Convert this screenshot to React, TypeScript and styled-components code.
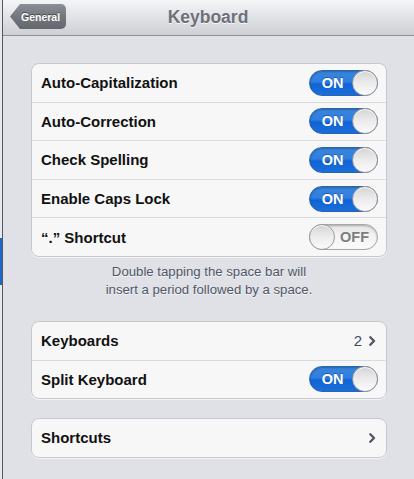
import React from "react";
import styled, { createGlobalStyle } from "styled-components";

const Global = createGlobalStyle`
  html, body { margin: 0; padding: 0; background: #dfe1e6; }
  body { font-family: "Liberation Sans", Arial, sans-serif; -webkit-font-smoothing: antialiased; }
  * { box-sizing: border-box; }
`;

const Frame = styled.div`
  display: flex;
  width: 414px;
  height: 479px;
  overflow: hidden;
  background: #dfe1e6;
`;

const EdgeStrip = styled.div`
  width: 2px;
  display: flex;
  flex-direction: column;
  background: #e8e9ec;
`;

const EdgeSpacer = styled.div<{ $h: number }>`
  height: ${(p) => p.$h}px;
`;

const EdgeSelected = styled.div`
  height: 47px;
  background: #1c66cc;
`;

const EdgeLine = styled.div`
  width: 1px;
  background: #55575c;
`;

const Main = styled.div`
  flex: 1;
  display: flex;
  flex-direction: column;
`;

const NavBar = styled.div`
  position: relative;
  height: 36px;
  display: flex;
  align-items: center;
  justify-content: center;
  background: linear-gradient(#f4f5f7 0%, #e3e4e8 45%, #cdcfd4 100%);
  border-bottom: 1px solid #8d9096;
`;

const BackButton = styled.div`
  position: absolute;
  left: 7px;
  top: 4px;
  width: 56px;
  height: 25px;
  display: flex;
  align-items: center;
  padding-left: 11px;
  border-radius: 5px;
  background: linear-gradient(#8c8f95 0%, #74777d 50%, #63666c 100%);
  clip-path: polygon(10px 0, 100% 0, 100% 100%, 10px 100%, 0 50%);
  color: #fff;
  font-weight: bold;
  font-size: 10.5px;
  text-shadow: 0 -1px 0 rgba(0, 0, 0, 0.45);
`;

const Title = styled.div`
  font-weight: bold;
  font-size: 17.5px;
  color: #6e7079;
  text-shadow: 0 1px 0 rgba(255, 255, 255, 0.8);
  margin-left: -1px;
  margin-top: -1px;
`;

const Content = styled.div`
  display: flex;
  flex-direction: column;
  padding: 27px 27px 0 28px;
`;

const Group = styled.div<{ $mb?: number }>`
  display: flex;
  flex-direction: column;
  background: #f7f7f7;
  border: 1px solid #c6c8cc;
  border-radius: 8px;
  margin-bottom: ${(p) => p.$mb ?? 0}px;
  box-shadow: 0 1px 0 rgba(255, 255, 255, 0.6);
`;

const Row = styled.div`
  box-sizing: content-box;
  height: 37.6px;
  display: flex;
  align-items: center;
  justify-content: space-between;
  padding: 0 8px 0 9px;
  & + & {
    border-top: 1px solid #d9dadd;
  }
`;

const Label = styled.div`
  font-weight: bold;
  font-size: 15px;
  color: #111;
`;

const Detail = styled.div`
  display: flex;
  align-items: center;
  gap: 7px;
  padding-right: 2px;
  font-size: 15px;
  color: #3f4b66;
`;

const Footer = styled.div`
  text-align: center;
  font-size: 13.2px;
  line-height: 18px;
  color: #4f5767;
  text-shadow: 0 1px 0 rgba(255, 255, 255, 0.7);
  padding: 6px 0 22px;
`;

const Track = styled.div<{ $on: boolean }>`
  width: 69px;
  height: 26px;
  border-radius: 13px;
  display: flex;
  flex-direction: ${(p) => (p.$on ? "row" : "row-reverse")};
  align-items: center;
  border: 1px solid ${(p) => (p.$on ? "#2a63ae" : "#a8a8a8")};
  background: ${(p) =>
    p.$on
      ? "linear-gradient(#3a86dc 0%, #2f7ee0 45%, #0f63d4 55%, #1b6fdb 100%)"
      : "linear-gradient(#e4e4e4 0%, #f3f3f3 45%, #fbfbfb 100%)"};
  box-shadow: inset 0 1px 2px rgba(0, 0, 0, 0.25);
`;

const SwitchText = styled.div<{ $on: boolean }>`
  flex: 1;
  text-align: center;
  font-weight: bold;
  font-size: 14.5px;
  color: ${(p) => (p.$on ? "#fff" : "#7d7d7d")};
  text-shadow: ${(p) =>
    p.$on ? "0 -1px 0 rgba(0,0,0,0.3)" : "0 1px 0 rgba(255,255,255,0.8)"};
  padding-${(p) => (p.$on ? "left" : "right")}: 2px;
`;

const Thumb = styled.div`
  width: 26px;
  height: 26px;
  margin: -1px;
  border-radius: 50%;
  border: 1px solid #9a9a9a;
  background: linear-gradient(#d4d4d4 0%, #ececec 50%, #fafafa 100%);
  box-shadow: inset 0 1px 0 #fff;
`;

const Switch = ({ on }: { on: boolean }) => (
  <Track $on={on}>
    <SwitchText $on={on}>{on ? "ON" : "OFF"}</SwitchText>
    <Thumb />
  </Track>
);

const Chevron = () => (
  <svg width="7" height="10" viewBox="0 0 7 10">
    <path d="M1.3 1.2 L5 5 L1.3 8.8" fill="none" stroke="#50555f" strokeWidth="2.3" strokeLinecap="round" strokeLinejoin="round" />
  </svg>
);

export default function App() {
  return (
    <>
      <Global />
      <Frame>
        <EdgeStrip>
          <EdgeSpacer $h={238} />
          <EdgeSelected />
        </EdgeStrip>
        <EdgeLine />
        <Main>
          <NavBar>
            <BackButton>General</BackButton>
            <Title>Keyboard</Title>
          </NavBar>
          <Content>
            <Group>
              <Row>
                <Label>Auto-Capitalization</Label>
                <Switch on />
              </Row>
              <Row>
                <Label>Auto-Correction</Label>
                <Switch on />
              </Row>
              <Row>
                <Label>Check Spelling</Label>
                <Switch on />
              </Row>
              <Row>
                <Label>Enable Caps Lock</Label>
                <Switch on />
              </Row>
              <Row>
                <Label>“.” Shortcut</Label>
                <Switch on={false} />
              </Row>
            </Group>
            <Footer>
              Double tapping the space bar will
              <br />
              insert a period followed by a space.
            </Footer>
            <Group $mb={19}>
              <Row>
                <Label>Keyboards</Label>
                <Detail>
                  2
                  <Chevron />
                </Detail>
              </Row>
              <Row>
                <Label>Split Keyboard</Label>
                <Switch on />
              </Row>
            </Group>
            <Group>
              <Row>
                <Label>Shortcuts</Label>
                <Detail>
                  <Chevron />
                </Detail>
              </Row>
            </Group>
          </Content>
        </Main>
      </Frame>
    </>
  );
}
